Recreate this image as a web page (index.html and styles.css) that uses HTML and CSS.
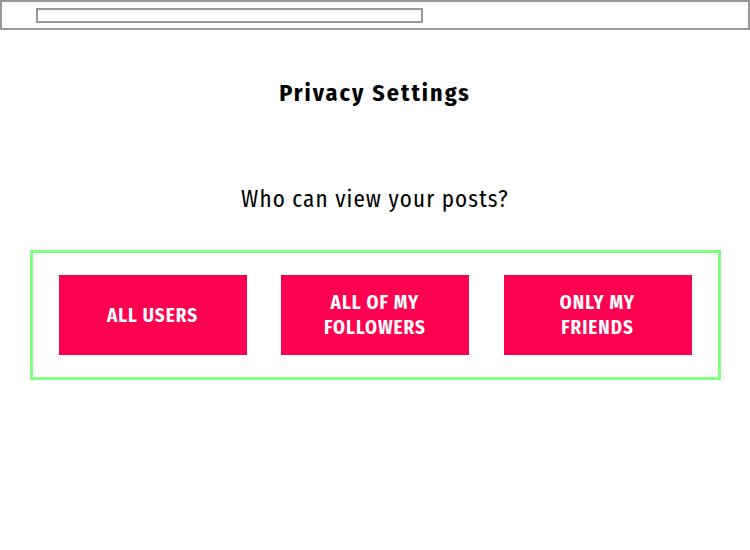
FILE: index.html
```html
<!DOCTYPE html>
<html lang="en">
<head>
<meta charset="utf-8">
<title>Privacy Settings</title>
<link rel="stylesheet" href="styles.css">
</head>
<body>
<header class="topbar">
  <div class="addressbar"></div>
</header>
<main class="content">
  <h1 class="title">Privacy Settings</h1>
  <p class="question">Who can view your posts?</p>
  <div class="options">
    <button class="option">ALL USERS</button>
    <button class="option">ALL OF MY<br>FOLLOWERS</button>
    <button class="option">ONLY MY<br>FRIENDS</button>
  </div>
</main>
</body>
</html>
```
FILE: styles.css
```css
* { box-sizing: border-box; }
html, body { margin: 0; padding: 0; background: #fff; }
body {
  font-family: "Fira Sans Condensed", "Fira Sans", "Open Sans", sans-serif;
  color: #000;
}
.topbar {
  height: 30px;
  border: 2px solid #999;
  padding: 6px 0 0 34px;
}
.addressbar {
  width: 387px;
  height: 15px;
  border: 2px solid #999;
}
.content {
  display: flex;
  flex-direction: column;
  align-items: center;
}
.title {
  margin: 49px 0 0;
  font-size: 24px;
  line-height: 28px;
  font-weight: 700;
  letter-spacing: 2px;
}
.question {
  margin: 78px 0 0;
  font-size: 23px;
  line-height: 28px;
  font-weight: 400;
  letter-spacing: 1.1px;
}
.options {
  margin-top: 37px;
  width: 691px;
  border: 3px solid #80ff80;
  padding: 22px 26px;
  display: flex;
  justify-content: space-between;
}
.option {
  width: 188px;
  height: 80px;
  border: 0;
  background: #ff0050;
  color: #fff;
  font-family: inherit;
  font-size: 19px;
  line-height: 25px;
  font-weight: 700;
  letter-spacing: 1px;
  padding: 0;
}
```
